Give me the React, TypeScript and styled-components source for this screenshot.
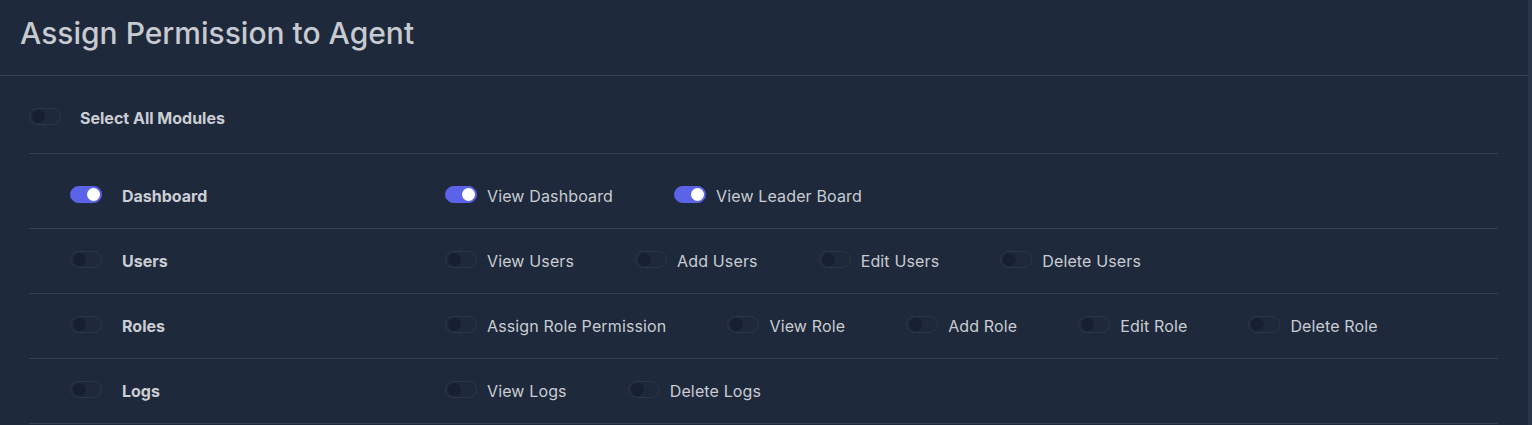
import React, { useState } from "react";
import styled, { createGlobalStyle } from "styled-components";

const GlobalStyle = createGlobalStyle`
  html, body {
    margin: 0;
    padding: 0;
    background: #1e293b;
  }
  body {
    font-family: Inter, "Noto Sans", "Liberation Sans", sans-serif;
    color: #c9cdd3;
    overflow: hidden;
  }
`;

type Module = {
  key: string;
  label: string;
  permissions: string[];
};

const modules: Module[] = [
  {
    key: "dashboard",
    label: "Dashboard",
    permissions: ["View Dashboard", "View Leader Board"],
  },
  {
    key: "users",
    label: "Users",
    permissions: ["View Users", "Add Users", "Edit Users", "Delete Users"],
  },
  {
    key: "roles",
    label: "Roles",
    permissions: [
      "Assign Role Permission",
      "View Role",
      "Add Role",
      "Edit Role",
      "Delete Role",
    ],
  },
  {
    key: "logs",
    label: "Logs",
    permissions: ["View Logs", "Delete Logs"],
  },
];

const initialState: Record<string, boolean> = {
  dashboard: true,
  "View Dashboard": true,
  "View Leader Board": true,
};

const Toggle = ({
  checked,
  onChange,
}: {
  checked: boolean;
  onChange: () => void;
}) => (
  <Switch
    type="button"
    role="switch"
    aria-checked={checked}
    $checked={checked}
    onClick={onChange}
  >
    <Knob $checked={checked} />
  </Switch>
);

export default function App() {
  const [state, setState] = useState<Record<string, boolean>>(initialState);

  const flip = (key: string) =>
    setState((prev) => ({ ...prev, [key]: !prev[key] }));

  return (
    <>
      <GlobalStyle />
      <Page>
        <Panel>
          <Header>
            <Title>Assign Permission to Agent</Title>
          </Header>

          <Body>
            <SelectAllRow>
              <Toggle
                checked={!!state.all}
                onChange={() => flip("all")}
              />
              <ModuleLabel>Select All Modules</ModuleLabel>
            </SelectAllRow>

            <ModuleList>
              {modules.map((mod) => (
                <ModuleRow key={mod.key}>
                  <ModuleCell>
                    <Toggle
                      checked={!!state[mod.key]}
                      onChange={() => flip(mod.key)}
                    />
                    <ModuleLabel>{mod.label}</ModuleLabel>
                  </ModuleCell>

                  <PermissionList>
                    {mod.permissions.map((perm) => (
                      <PermissionItem key={perm}>
                        <Toggle
                          checked={!!state[perm]}
                          onChange={() => flip(perm)}
                        />
                        <PermissionLabel>{perm}</PermissionLabel>
                      </PermissionItem>
                    ))}
                  </PermissionList>
                </ModuleRow>
              ))}
            </ModuleList>
          </Body>
        </Panel>
        <Rail />
      </Page>
    </>
  );
}

const Page = styled.div`
  display: flex;
  width: 100%;
  height: 425px;
  background: #1e293b;
`;

const Panel = styled.div`
  flex: 1;
  display: flex;
  flex-direction: column;
  min-width: 0;
`;

const Rail = styled.div`
  width: 4px;
  flex-shrink: 0;
  background: #2a374a;
`;

const Header = styled.div`
  height: 76px;
  box-sizing: border-box;
  padding: 0 20px 10px;
  display: flex;
  align-items: center;
  border-bottom: 1px solid #334155;
`;

const Title = styled.h1`
  margin: 0;
  font-size: 30px;
  font-weight: 500;
  color: #c7cad0;
`;

const Body = styled.div`
  padding: 0 30px 0 29px;
`;

const SelectAllRow = styled.div`
  display: flex;
  align-items: center;
  gap: 19px;
  height: 78px;
  box-sizing: border-box;
  padding-top: 7px;
  border-bottom: 1px solid #334155;
`;

const ModuleList = styled.div`
  padding-top: 10px;
`;

const ModuleRow = styled.div`
  display: grid;
  grid-template-columns: 416px 1fr;
  align-items: center;
  height: 65px;
  box-sizing: border-box;
  border-bottom: 1px solid #334155;
`;

const ModuleCell = styled.div`
  display: flex;
  align-items: center;
  gap: 20px;
  padding-left: 41px;
`;

const ModuleLabel = styled.span`
  font-size: 16px;
  font-weight: 700;
  color: #cbced4;
`;

const PermissionList = styled.div`
  display: flex;
  align-items: center;
  gap: 61px;
`;

const PermissionItem = styled.label`
  display: flex;
  align-items: center;
  gap: 10px;
`;

const PermissionLabel = styled.span`
  font-size: 16px;
  font-weight: 400;
  letter-spacing: 0.14px;
  color: #c9ccd2;
`;

const Switch = styled.button<{ $checked: boolean }>`
  position: relative;
  width: 32px;
  height: 17px;
  padding: 0;
  margin: 0 0 4px;
  border-radius: 9px;
  cursor: pointer;
  flex-shrink: 0;
  box-sizing: border-box;
  border: 1px solid ${(p) => (p.$checked ? "#5b63e8" : "#2c3748")};
  background: ${(p) => (p.$checked ? "#5b63e8" : "#1e293b")};
`;

const Knob = styled.span<{ $checked: boolean }>`
  position: absolute;
  top: 1px;
  left: ${(p) => (p.$checked ? "16px" : "2px")};
  width: 13px;
  height: 13px;
  border-radius: 50%;
  background: ${(p) => (p.$checked ? "#ffffff" : "#172030")};
`;
